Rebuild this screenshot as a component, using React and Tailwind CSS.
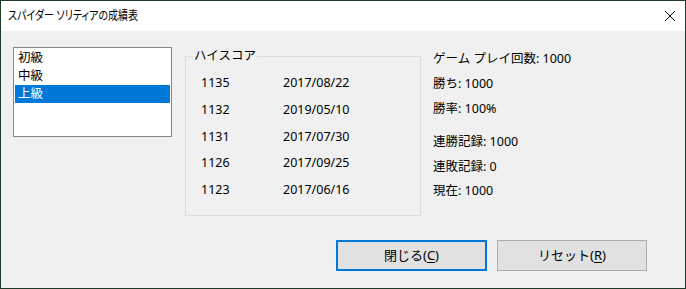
import React from "react";

export default function App() {
  const scores = [
    ["1135", "2017/08/22"],
    ["1132", "2019/05/10"],
    ["1131", "2017/07/30"],
    ["1126", "2017/09/25"],
    ["1123", "2017/06/16"],
  ];
  return (
    <div className="w-[686px] h-[289px] border border-[#1d3a27] flex flex-col text-[12.5px] text-black font-['Noto_Sans','Noto_Sans_CJK_JP',sans-serif] overflow-hidden">
      <div className="h-[30px] bg-white flex items-center justify-between pl-[7px] pr-[8px] shrink-0">
        <span className="inline-block text-[12.5px] origin-left scale-x-[0.8] whitespace-nowrap [font-feature-settings:'palt']">
          スパイダー ソリティアの成績表
        </span>
        <svg width="12" height="12" viewBox="0 0 12 12" className="mr-[1px]">
          <path d="M1 1 L11 11 M11 1 L1 11" stroke="#111" strokeWidth="1" fill="none" />
        </svg>
      </div>
      <div className="flex-1 bg-[#f0f0f0] flex flex-col">
        <div className="flex items-start pl-[12px] pt-[16px]">
          <div className="w-[159px] h-[90px] border border-[#828790] bg-white p-px">
            <div className="h-[18px] leading-[18px] pl-[3px]">初級</div>
            <div className="h-[18px] leading-[18px] pl-[3px]">中級</div>
            <div className="h-[18px] leading-[18px] pl-[3px] bg-[#0078d7] text-white">上級</div>
          </div>
          <fieldset className="ml-[13px] mt-[2px] w-[236px] h-[167px] border border-[#dcdcdc] px-[8px] pt-0">
            <legend className="px-[1px] ml-[-1px] leading-[14px]">ハイスコア</legend>
            <div className="flex flex-col pt-[7px]">
              {scores.map(([s, d]) => (
                <div key={s} className="h-[26.75px] flex items-center">
                  <span className="w-[89px] pl-[7px]">{s}</span>
                  <span>{d}</span>
                </div>
              ))}
            </div>
          </fieldset>
          <div className="ml-[12px] flex flex-col mt-[-1px]">
            <div className="h-[25px] leading-[25px]">ゲーム プレイ回数: 1000</div>
            <div className="h-[25px] leading-[25px]">勝ち: 1000</div>
            <div className="h-[25px] leading-[25px]">勝率: 100%</div>
            <div className="h-[8px]" />
            <div className="h-[25px] leading-[25px]">連勝記録: 1000</div>
            <div className="h-[25px] leading-[25px]">連敗記録: 0</div>
            <div className="h-[24px] leading-[24px]">現在: 1000</div>
          </div>
        </div>
        <div className="flex justify-end gap-[10px] pr-[38px] mt-auto mb-[17px]">
          <button className="w-[151px] h-[31px] border-2 border-[#0078d7] bg-[#e1e1e1] flex items-center justify-center">
            <span className="text-[13px]">
              閉じる(<span className="underline underline-offset-2">C</span>)
            </span>
          </button>
          <button className="w-[150px] h-[31px] border border-[#adadad] bg-[#e1e1e1] flex items-center justify-center">
            <span className="text-[13px]">
              リセット(<span className="underline underline-offset-2">R</span>)
            </span>
          </button>
        </div>
      </div>
    </div>
  );
}
